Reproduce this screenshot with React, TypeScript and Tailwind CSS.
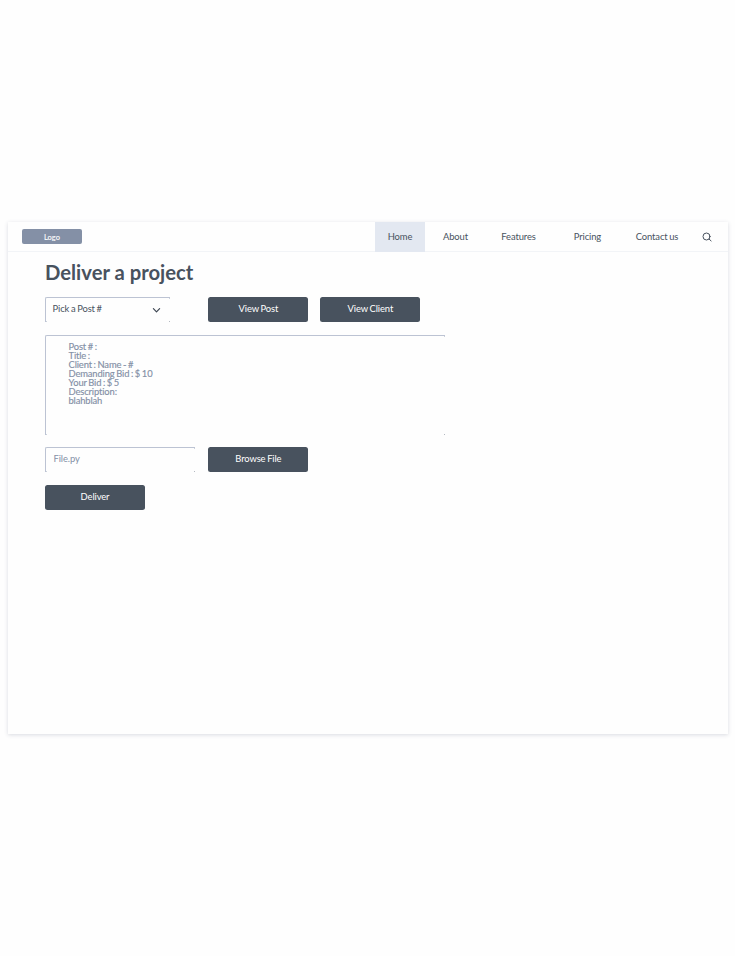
import type { ReactNode } from "react";

const navItems = [
  { label: "About", cell: "w-[61px]" },
  { label: "Features", cell: "w-[65px]" },
  { label: "Pricing", cell: "w-[73px]" },
  { label: "Contact us", cell: "w-[66px]" },
];

const details = [
  "Post # :",
  "Title :",
  "Client : Name - #",
  "Demanding Bid : $ 10",
  "Your Bid : $ 5",
  "Description:",
  "blahblah",
];

function Button({ children, className = "" }: { children: ReactNode; className?: string }) {
  return (
    <button
      className={`flex h-[25px] w-[100px] items-center justify-center rounded-[2.5px] bg-[#48525e] pb-px text-[9.4px] leading-[12px] tracking-[-0.1px] [word-spacing:-0.6px] whitespace-nowrap text-white ${className}`}
    >
      {children}
    </button>
  );
}

function Field({ children, className = "" }: { children: ReactNode; className?: string }) {
  return (
    <div className={`relative rounded-tl-[2px] border-t border-l border-[#bcc3d3] ${className}`}>
      {children}
      <span className="absolute top-0 right-0 size-px bg-[#ccd2dc]" />
      <span className="absolute right-0 bottom-0 size-px bg-[#b4b9c1]" />
      <span className="absolute bottom-0 left-0 size-px bg-[#ccd2dc]" />
    </div>
  );
}

export default function App() {
  return (
    <div className="h-[956px] w-[735px] bg-[#fefefe] px-2 pt-[222px] font-['Lato',sans-serif] text-[#48525e] [font-variant-ligatures:none]">
      <main className="h-[512px] w-[720px] bg-[#fefefe] shadow-[0_1px_4px_rgba(72,82,110,0.2)]">
        <header className="flex h-[30px] items-stretch border-b border-[#f2f4f7] pl-[14.4px]">
          <div className="mt-[7.4px] flex h-[15px] w-[59.2px] items-center justify-center rounded-[2px] bg-[#8490a6] pt-px text-[7.5px] leading-none text-white [-webkit-text-stroke:0.1px]">
            Logo
          </div>
          <nav className="ml-[293.4px] flex text-[9.4px] tracking-[-0.1px] text-[#48525e] [word-spacing:-0.7px]">
            <a className="flex h-[30px] w-[50px] items-center justify-center bg-[#e3e8f1]">Home</a>
            {navItems.map((item) => (
              <a key={item.label} className={`flex h-[30px] items-center justify-center whitespace-nowrap ${item.cell}`}>
                {item.label}
              </a>
            ))}
          </nav>
          <button className="flex h-[30px] w-[34px] items-center justify-center" aria-label="Search">
            <svg width="10" height="10" viewBox="0 0 10 10" fill="none" stroke="#48525e" strokeWidth="1" strokeLinecap="round">
              <circle cx="4.5" cy="4.5" r="3.5" />
              <path d="M7.1 7.1 9.1 8.9" />
            </svg>
          </button>
        </header>
        <section className="pl-[37px]">
          <h1 className="h-[33px] pt-[7px] text-[20.25px] leading-[26px] font-bold whitespace-nowrap">Deliver a project</h1>
          <div className="mt-3 flex">
            <Field className="flex h-[25px] w-[125px] items-center justify-between pr-[9px] pb-px pl-[6.5px] text-[9.4px] tracking-[-0.1px] [word-spacing:-0.6px]">
              <span>Pick a Post #</span>
              <svg width="9" height="7" viewBox="0 0 9 7" fill="none" stroke="#3d4652" strokeWidth="1.2" strokeLinecap="round" strokeLinejoin="round" className="mt-px">
                <path d="M1.4 1.7 4.5 4.8 7.6 1.7" />
              </svg>
            </Field>
            <Button className="ml-[38.4px]">View Post</Button>
            <Button className="ml-[12px]">View Client</Button>
          </div>
          <Field className="mt-[13px] h-[100px] w-[400px] pt-[6.4px] pl-[22.5px] text-[9.4px] leading-[9px] tracking-[-0.13px] text-[#8490a6] [word-spacing:-0.6px] [-webkit-text-stroke:0.15px]">
            {details.map((line) => (
              <p key={line} className="whitespace-nowrap">{line}</p>
            ))}
          </Field>
          <div className="mt-[12px] flex">
            <Field className="flex h-[25px] w-[150px] items-center pb-px pl-[7.5px] text-[9.4px] tracking-[-0.1px] text-[#8490a6]">
              <span>File.py</span>
            </Field>
            <Button className="ml-[13.4px]">Browse File</Button>
          </div>
          <Button className="mt-[13px]">Deliver</Button>
        </section>
      </main>
    </div>
  );
}
